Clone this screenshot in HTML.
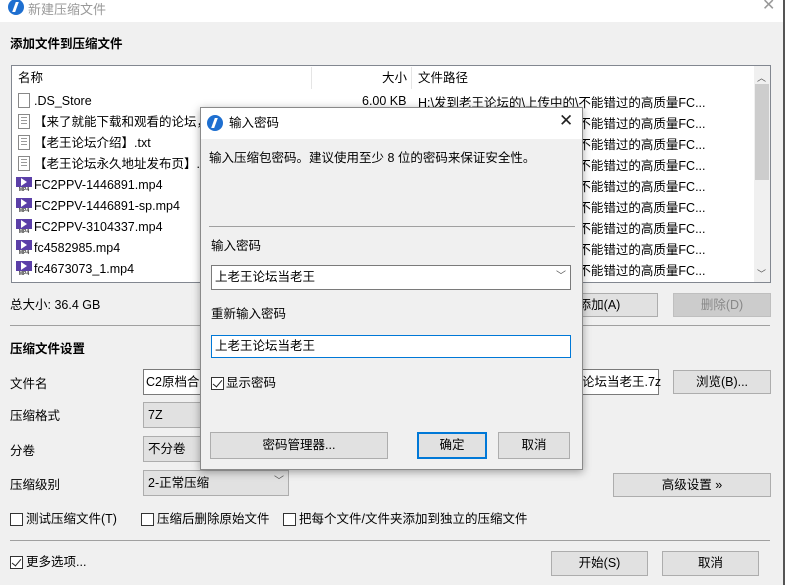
<!DOCTYPE html>
<html><head><meta charset="utf-8"><style>
*{margin:0;padding:0;box-sizing:border-box}
body{width:785px;height:585px;overflow:hidden;background:#f0f0f0;font-family:"Liberation Sans","Noto Sans CJK SC",sans-serif;font-size:12.5px;line-height:16px;color:#000;position:relative}
.a{position:absolute;white-space:nowrap}
.btn{position:absolute;background:#e1e1e1;border:1px solid #adadad;text-align:center}
.cb{position:absolute;width:13px;height:13px;border:1px solid #333;background:#fff}
.chk::after{content:"";position:absolute;left:3px;top:0px;width:4px;height:8px;border:solid #222;border-width:0 1.5px 1.5px 0;transform:rotate(40deg)}
.inp{position:absolute;background:#fff;border:1px solid #7a7a7a}
.mp4{position:absolute;left:16px;width:16px;height:16px;background:#5b3fa8}
.mp4::before{content:"";position:absolute;left:5px;top:1px;border-left:6px solid #fff;border-top:4px solid transparent;border-bottom:4px solid transparent}
.mp4::after{content:"MP4";position:absolute;left:0;bottom:0;width:16px;height:6px;background:#fff;color:#333;font-size:5px;line-height:6px;font-weight:bold;text-align:center}
.doc{position:absolute;left:18px;width:12px;height:15px;border:1px solid #888;background:#fff}
.doc.t{background:repeating-linear-gradient(#fff 0 2px,#999 2px 3px);background-clip:content-box;padding:2px 2px}
.logo{position:absolute;width:16px;height:16px;border-radius:50%;background:#1e6fd0}
.logo::after{content:"";position:absolute;left:6px;top:3px;width:3px;height:10px;background:#fff;transform:skewX(-20deg)}
</style></head><body>
<div class="a" style="left:0;top:0;width:785px;height:22px;background:#fff"></div>
<div class="logo" style="left:8px;top:-1px"></div>
<div class="a" style="left:28px;top:2px;color:#999;font-size:13px">新建压缩文件</div>
<div class="a" style="left:762px;top:-2px;color:#999;font-size:16px">✕</div>
<div class="a" style="left:783px;top:0;width:2px;height:585px;background:#555"></div>
<div class="a" style="left:10px;top:36px;font-weight:bold">添加文件到压缩文件</div>

<div class="a" style="left:11px;top:65px;width:760px;height:218px;background:#fff;border:1px solid #828790"></div>
<div class="a" style="left:311px;top:67px;width:1px;height:22px;background:#e5e5e5"></div>
<div class="a" style="left:411px;top:67px;width:1px;height:22px;background:#e5e5e5"></div>
<div class="a" style="left:18px;top:70px">名称</div>
<div class="a" style="left:382px;top:70px">大小</div>
<div class="a" style="left:418px;top:70px">文件路径</div>
<div class="a" style="left:754px;top:66px;width:16px;height:216px;background:#f0f0f0"></div>
<div class="a" style="left:755px;top:84px;width:14px;height:96px;background:#cdcdcd"></div>
<div class="a" style="left:757px;top:70px;font-size:9px;color:#555">︿</div>
<div class="a" style="left:757px;top:266px;font-size:9px;color:#555">﹀</div>

<div class="doc" style="top:93px"></div><div class="a" style="left:34px;top:93px">.DS_Store</div>
<div class="doc t" style="top:114px"></div><div class="a" style="left:34px;top:114px">【来了就能下载和观看的论坛，</div>
<div class="doc t" style="top:135px"></div><div class="a" style="left:34px;top:135px">【老王论坛介绍】.txt</div>
<div class="doc t" style="top:156px"></div><div class="a" style="left:34px;top:156px">【老王论坛永久地址发布页】.txt</div>
<div class="mp4" style="top:177px"></div><div class="a" style="left:34px;top:177px">FC2PPV-1446891.mp4</div>
<div class="mp4" style="top:198px"></div><div class="a" style="left:34px;top:198px">FC2PPV-1446891-sp.mp4</div>
<div class="mp4" style="top:219px"></div><div class="a" style="left:34px;top:219px">FC2PPV-3104337.mp4</div>
<div class="mp4" style="top:240px"></div><div class="a" style="left:34px;top:240px">fc4582985.mp4</div>
<div class="mp4" style="top:261px"></div><div class="a" style="left:34px;top:261px">fc4673073_1.mp4</div>
<div class="a" style="left:362px;top:93px">6.00 KB</div>
<div class="a" style="left:418px;top:93px;line-height:21px;white-space:pre">H:\发到老王论坛的\上传中的\不能错过的高质量FC...
H:\发到老王论坛的\上传中的\不能错过的高质量FC...
H:\发到老王论坛的\上传中的\不能错过的高质量FC...
H:\发到老王论坛的\上传中的\不能错过的高质量FC...
H:\发到老王论坛的\上传中的\不能错过的高质量FC...
H:\发到老王论坛的\上传中的\不能错过的高质量FC...
H:\发到老王论坛的\上传中的\不能错过的高质量FC...
H:\发到老王论坛的\上传中的\不能错过的高质量FC...
H:\发到老王论坛的\上传中的\不能错过的高质量FC...</div>

<div class="a" style="left:10px;top:297px">总大小: 36.4 GB</div>
<div class="btn" style="left:541px;top:293px;width:117px;height:24px;line-height:22px">添加(A)</div>
<div class="btn" style="left:673px;top:293px;width:98px;height:24px;line-height:22px;background:#ccc;border-color:#bfbfbf;color:#888">删除(D)</div>
<div class="a" style="left:10px;top:325px;width:760px;height:1px;background:#a0a0a0"></div>
<div class="a" style="left:10px;top:341px;font-weight:bold">压缩文件设置</div>
<div class="a" style="left:10px;top:376px">文件名</div>
<div class="inp" style="left:143px;top:369px;width:516px;height:26px"></div>
<div class="a" style="left:146px;top:374px">C2原档合集</div>
<div class="a" style="left:582px;top:374px">论坛当老王.7z</div>
<div class="btn" style="left:673px;top:370px;width:98px;height:24px;line-height:22px">浏览(B)...</div>
<div class="a" style="left:10px;top:408px">压缩格式</div>
<div class="btn" style="left:143px;top:402px;width:150px;height:26px;text-align:left;padding:4px 4px">7Z</div>
<div class="a" style="left:10px;top:443px">分卷</div>
<div class="btn" style="left:143px;top:436px;width:150px;height:26px;text-align:left;padding:4px 4px">不分卷</div>
<div class="a" style="left:10px;top:477px">压缩级别</div>
<div class="btn" style="left:143px;top:470px;width:146px;height:26px;text-align:left;padding:4px 4px">2-正常压缩</div>
<div class="a" style="left:274px;top:474px;font-size:10px;color:#555">﹀</div>
<div class="btn" style="left:613px;top:473px;width:158px;height:24px;line-height:22px">高级设置 »</div>
<div class="cb" style="left:10px;top:513px"></div><div class="a" style="left:26px;top:511px">测试压缩文件(T)</div>
<div class="cb" style="left:141px;top:513px"></div><div class="a" style="left:157px;top:511px">压缩后删除原始文件</div>
<div class="cb" style="left:283px;top:513px"></div><div class="a" style="left:299px;top:511px">把每个文件/文件夹添加到独立的压缩文件</div>
<div class="a" style="left:10px;top:540px;width:760px;height:1px;background:#a0a0a0"></div>
<div class="cb chk" style="left:10px;top:556px"></div><div class="a" style="left:26px;top:554px">更多选项...</div>
<div class="btn" style="left:551px;top:551px;width:97px;height:25px;line-height:23px">开始(S)</div>
<div class="btn" style="left:662px;top:551px;width:97px;height:25px;line-height:23px">取消</div>

<!-- dialog -->
<div class="a" style="left:200px;top:107px;width:383px;height:363px;background:#f0f0f0;border:1px solid #8a8a8a;box-shadow:0 2px 8px rgba(0,0,0,.35)"></div>
<div class="a" style="left:201px;top:108px;width:381px;height:31px;background:#fff"></div>
<div class="logo" style="left:207px;top:115px"></div>
<div class="a" style="left:229px;top:115px">输入密码</div>
<div class="a" style="left:559px;top:113px;font-size:17px;color:#222">✕</div>
<div class="a" style="left:209px;top:150px">输入压缩包密码。建议使用至少 8 位的密码来保证安全性。</div>
<div class="a" style="left:209px;top:226px;width:366px;height:1px;background:#a0a0a0"></div>
<div class="a" style="left:211px;top:238px">输入密码</div>
<div class="inp" style="left:211px;top:265px;width:360px;height:25px"></div>
<div class="a" style="left:215px;top:269px">上老王论坛当老王</div>
<div class="a" style="left:556px;top:269px;font-size:10px;color:#555">﹀</div>
<div class="a" style="left:211px;top:306px">重新输入密码</div>
<div class="inp" style="left:211px;top:335px;width:360px;height:23px;border-color:#0078d7"></div>
<div class="a" style="left:215px;top:338px">上老王论坛当老王</div>
<div class="cb chk" style="left:211px;top:377px"></div><div class="a" style="left:226px;top:375px">显示密码</div>
<div class="btn" style="left:210px;top:432px;width:178px;height:27px;line-height:25px">密码管理器...</div>
<div class="btn" style="left:417px;top:432px;width:70px;height:27px;line-height:23px;border:2px solid #0078d7">确定</div>
<div class="btn" style="left:498px;top:432px;width:72px;height:27px;line-height:25px">取消</div>
</body></html>
